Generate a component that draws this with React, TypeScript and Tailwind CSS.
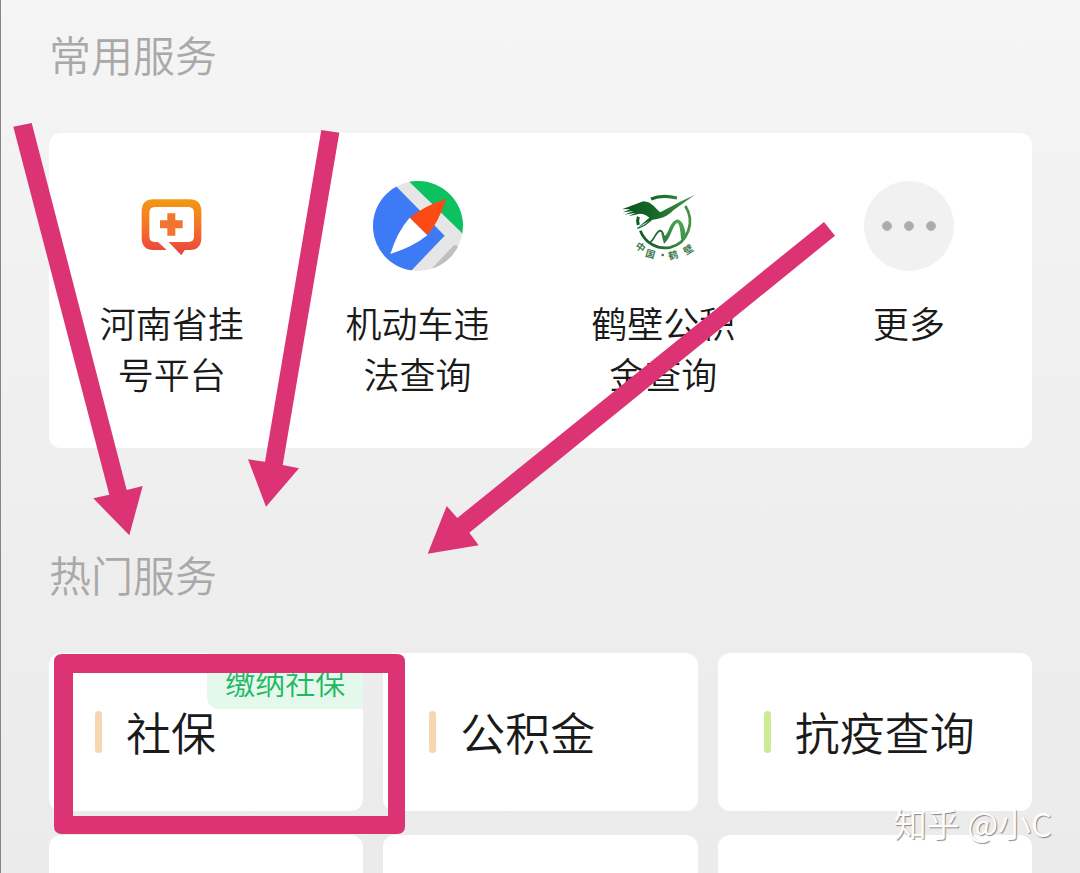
import type { ReactNode } from 'react';

interface Service {
  lines: string[];
  icon: ReactNode;
}

interface Tile {
  name: string;
  bar: string;
  tag?: string;
}

function HospitalIcon() {
  return (
    <svg viewBox="-9 -12 270 270" className="size-full" aria-hidden="true">
      <defs>
        <linearGradient id="hospital" x1="0" y1="40" x2="0" y2="210" gradientUnits="userSpaceOnUse">
          <stop offset="0" stopColor="#f39a12" />
          <stop offset="0.5" stopColor="#f47428" />
          <stop offset="1" stopColor="#ea3f3f" />
        </linearGradient>
      </defs>
      <path
        fill="url(#hospital)"
        d="M70 43H178Q214 43 214 80V158Q214 194 180 195H164L154 211L116 171H176Q192 171 192 154V84Q192 66 176 66H74Q58 66 58 84V154Q58 171 74 171H84L110 195H70Q35 194 35 158V80Q35 43 70 43Z"
      />
      <path fill="#f1752e" d="M112 85H136V106H158V130H136V152H112V130H90V106H112Z" />
    </svg>
  );
}

function CompassIcon() {
  return (
    <svg viewBox="23 17 270 270" className="size-full" aria-hidden="true">
      <defs>
        <clipPath id="compass">
          <circle cx="158" cy="152" r="135" />
        </clipPath>
      </defs>
      <g clipPath="url(#compass)">
        <rect x="20" y="10" width="280" height="280" fill="#e6e6e6" />
        <path fill="#3d7af5" d="M10 10H70L238 181L134 290H10Z" />
        <path fill="#0cc160" d="M108 -4L300 183V-4Z" />
        <path fill="#bfbfbf" d="M190 290L264 211Q270 206 277 213L300 290Z" />
      </g>
      <path fill="#fa4b14" d="M243 70Q178 91 133 127L186 180Q220 140 243 70Z" />
      <path fill="#fff" d="M75 236Q96 168 133 127L186 180Q143 215 75 236Z" />
    </svg>
  );
}

function CraneIcon() {
  return (
    <svg viewBox="27 3 270 270" className="size-full" aria-hidden="true">
      <defs>
        <linearGradient id="crane" x1="40" y1="80" x2="250" y2="80" gradientUnits="userSpaceOnUse">
          <stop offset="0" stopColor="#07541d" />
          <stop offset="0.5" stopColor="#176b28" />
          <stop offset="1" stopColor="#4b934b" />
        </linearGradient>
        <linearGradient id="hills" x1="130" y1="210" x2="210" y2="120" gradientUnits="userSpaceOnUse">
          <stop offset="0" stopColor="#1d6634" />
          <stop offset="1" stopColor="#4ba653" />
        </linearGradient>
      </defs>
      <g fill="none" stroke="url(#crane)">
        <path strokeWidth="10" d="M126 57Q160 43 204 54" />
        <path strokeWidth="8" d="M229 78C260 125 236 190 184 202C144 210 108 188 94 152" />
        <path strokeWidth="9" d="M88 110Q84 121 88 135" />
        <path strokeWidth="4" d="M85 145Q112 137 133 113" />
      </g>
      <path
        fill="url(#crane)"
        d="M258 44L218 63L154 97C138 86 130 65 103 64L39 88L64 87L42 97L73 93L46 104L80 98L58 109L92 101Q108 101 121 113L84 145Q119 119 144 117Q176 111 193 91Z"
      />
      <path fill="none" stroke="#1d6634" strokeWidth="5" d="M124 187C139 174 140 155 154 152Q164 153 164 181" />
      <path
        fill="url(#hills)"
        d="M156 157Q161 174 165 192C189 169 189 139 204 129Q213 127 216 177L231 174C229 137 217 117 202 119C182 126 179 160 168 167Z"
      />
      <g fill="#3e7c4d" fontSize="29" fontWeight="700" textAnchor="middle">
        <text transform="translate(88 210) rotate(35)">中</text>
        <text transform="translate(121 232) rotate(16)">国</text>
        <text transform="translate(195 236) rotate(-13)">鹤</text>
        <text transform="translate(243 218) rotate(-32)">壁</text>
      </g>
      <circle cx="161" cy="225" r="4" fill="#3e7c4d" />
    </svg>
  );
}

function MoreIcon() {
  return (
    <span className="flex size-full items-center justify-center gap-3.5 rounded-full bg-[#f1f1f1]">
      <span className="size-2 rounded-full bg-[#ababab] outline outline-[#ababab]" />
      <span className="size-2 rounded-full bg-[#ababab] outline outline-[#ababab]" />
      <span className="size-2 rounded-full bg-[#ababab] outline outline-[#ababab]" />
    </span>
  );
}

const services: Service[] = [
  { lines: ['河南省挂', '号平台'], icon: <HospitalIcon /> },
  { lines: ['机动车违', '法查询'], icon: <CompassIcon /> },
  { lines: ['鹤壁公积', '金查询'], icon: <CraneIcon /> },
  { lines: ['更多'], icon: <MoreIcon /> },
];

const tiles: Tile[] = [
  { name: '社保', bar: 'bg-[#f7d6b2]', tag: '缴纳社保' },
  { name: '公积金', bar: 'bg-[#f7d6b2]' },
  { name: '抗疫查询', bar: 'bg-[#cdea94]' },
];

function SectionTitle({ children }: { children: ReactNode }) {
  return <h2 className="mb-[52px] text-[42px] leading-[54px] font-[350] text-[#a9a9a9]">{children}</h2>;
}

function Annotations() {
  return (
    <svg viewBox="1 0 1079 873" className="pointer-events-none absolute top-0 left-0 w-full" aria-hidden="true">
      <g fill="#db3374">
        <path d="M13.3 126.7L31.7 123L126.7 490L142.7 486L129.3 535.3L93.3 498.3L109.3 494.7Z" />
        <path d="M321.3 130L339.3 132.7L282.7 465L299 468.3L266 506.7L248 459.3L265 461.7Z" />
        <path d="M824 222L835 235.7L469.3 532.7L478.7 545.3L427.7 553.7L446.7 506L457.3 518Z" />
      </g>
      <path
        fill="#db3374"
        fillRule="evenodd"
        d="M62 654H397Q405 654 405 662V826Q405 834 397 834H62Q54 834 54 826V662Q54 654 62 654ZM73 673V816H388V673Z"
      />
    </svg>
  );
}

export default function App() {
  return (
    <main className="relative h-screen overflow-hidden border-l border-[#858585] bg-linear-to-b from-[#f5f5f5] via-[#efefef] to-[#ebebeb] px-12 pt-[27px] font-['Noto_Sans_CJK_SC',sans-serif] font-[350] text-[#1a1a1a]">
      <section>
        <SectionTitle>常用服务</SectionTitle>
        <div className="grid grid-cols-4 rounded-xl bg-white pt-12 pb-[49px]">
          {services.map((service) => (
            <button key={service.lines[0]} type="button" className="flex flex-col items-center">
              <span className="mb-[26px] size-[90px]">{service.icon}</span>
              <span className="text-4xl leading-[51px]">
                {service.lines.map((line) => (
                  <span key={line} className="block">
                    {line}
                  </span>
                ))}
              </span>
            </button>
          ))}
        </div>
      </section>

      <section className="mt-[99px]">
        <SectionTitle>热门服务</SectionTitle>
        <div className="grid grid-cols-3 gap-x-5 gap-y-6">
          {tiles.map((tile) => (
            <button
              key={tile.name}
              type="button"
              className="relative flex h-[158px] items-center overflow-hidden rounded-xl bg-white pl-[46px]"
            >
              <span className={`h-[42px] w-[7px] rounded-sm ${tile.bar}`} />
              <span className="ml-6 text-[45px] leading-14">{tile.name}</span>
              {tile.tag && (
                <span className="absolute top-0 right-0 rounded-bl-xl bg-[#e5f8ec] px-[18px] text-3xl leading-14 text-[#1fb863]">
                  {tile.tag}
                </span>
              )}
            </button>
          ))}
          <div className="h-[158px] rounded-xl bg-white" />
          <div className="h-[158px] rounded-xl bg-white" />
          <div className="h-[158px] rounded-xl bg-white" />
        </div>
      </section>

      <Annotations />
      <p className="absolute right-7 bottom-7 text-[33px] leading-11 text-white [text-shadow:1px_1px_1px_#888]">
        知乎 @小C
      </p>
    </main>
  );
}
